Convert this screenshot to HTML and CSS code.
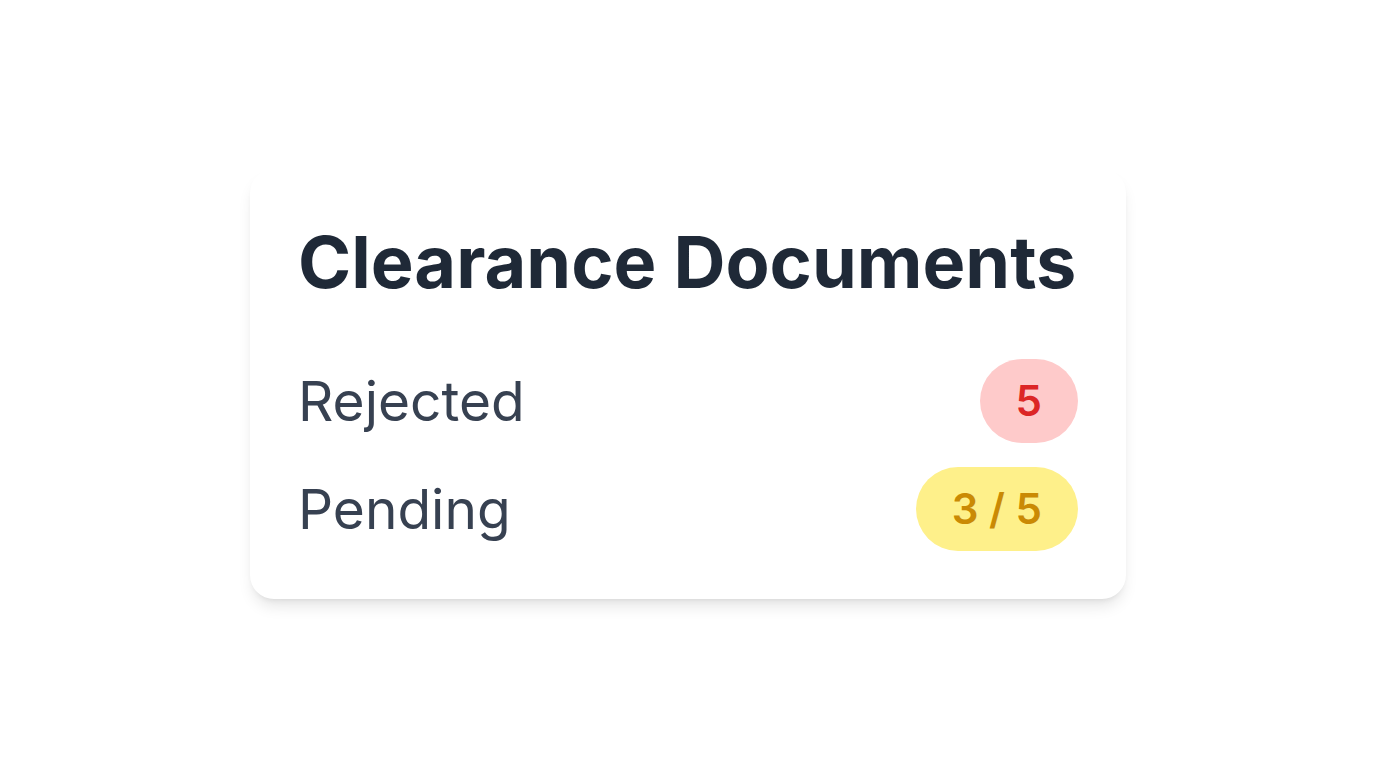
FILE: index.html
```html
<!DOCTYPE html>
<html lang="en">
<head>
<meta charset="utf-8">
<title>Clearance Documents</title>
<link rel="stylesheet" href="styles.css">
</head>
<body>
<main class="page">
  <section class="card">
    <h1 class="card-title">Clearance Documents</h1>
    <div class="rows">
      <div class="row">
        <span class="row-label">Rejected</span>
        <span class="badge badge-red">5</span>
      </div>
      <div class="row">
        <span class="row-label">Pending</span>
        <span class="badge badge-yellow">3 / 5</span>
      </div>
    </div>
  </section>
</main>
</body>
</html>
```

FILE: styles.css
```css
* { box-sizing: border-box; }
html, body {
  margin: 0;
  padding: 0;
  background: #ffffff;
  font-family: Inter, "Noto Sans", "Liberation Sans", sans-serif;
}
.page {
  width: 1376px;
  height: 768px;
  display: flex;
  align-items: center;
  justify-content: center;
}
.card {
  width: 876px;
  background: #ffffff;
  border-radius: 24px;
  padding: 48px;
  box-shadow: 0 10px 15px -3px rgba(0,0,0,0.1), 0 4px 6px -4px rgba(0,0,0,0.1);
}
.card-title {
  margin: 0 0 52px 0;
  font-size: 72px;
  line-height: 90px;
  font-weight: 700;
  color: #1f2937;
  white-space: nowrap;
}
.rows {
  display: flex;
  flex-direction: column;
  gap: 24px;
}
.row {
  display: flex;
  align-items: center;
  justify-content: space-between;
}
.row-label {
  font-size: 55px;
  line-height: 64px;
  color: #374151;
}
.badge {
  font-size: 42px;
  line-height: 60px;
  font-weight: 600;
  padding: 12px 36px;
  border-radius: 9999px;
}
.badge-red {
  background: #fecaca;
  color: #dc2626;
}
.badge-yellow {
  background: #fef08a;
  color: #ca8a04;
}
```
